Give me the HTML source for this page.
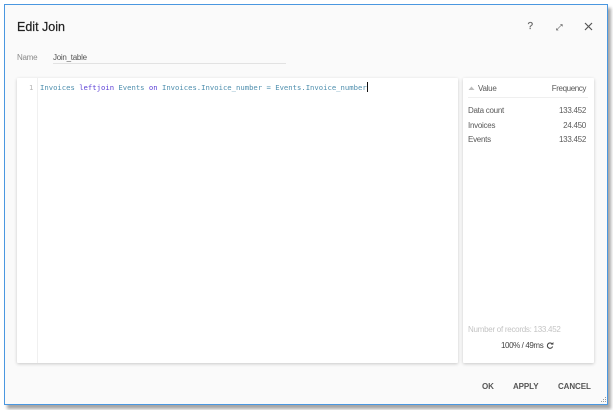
<!DOCTYPE html>
<html>
<head>
<meta charset="utf-8">
<style>
html,body{margin:0;padding:0;background:#fff;}
body{width:613px;height:410px;position:relative;overflow:hidden;font-family:"Liberation Sans",sans-serif;}
#w{position:absolute;left:0;top:0;width:613px;height:410px;filter:blur(.25px);}
.a{position:absolute;white-space:nowrap;}
#frame{left:4px;top:4px;width:602px;height:399px;background:#fafafa;border:1px solid #4a97e0;box-shadow:3px 4px 3px rgba(0,0,0,.35);}
.card{background:#fff;box-shadow:0 1px 3px rgba(0,0,0,.2);border-radius:1px;}
.t{font-size:8px;letter-spacing:-.27px;color:#5a5a5a;line-height:12px;}
.r{text-align:right;}
.code{font-family:"DejaVu Sans Mono",monospace;font-size:7.24px;line-height:12px;color:#4f8fae;}
.k{color:#5b3fd6;}
.btn{font-size:8px;font-weight:bold;color:#555;line-height:12px;letter-spacing:-.1px;}
</style>
</head>
<body>
<div id="w">
<div class="a" id="frame"></div>

<div class="a" style="left:17px;top:19px;font-size:12.5px;line-height:16px;color:#222;-webkit-text-stroke:.2px #222;">Edit Join</div>

<div class="a" style="left:527.5px;top:21px;font-size:10px;line-height:12px;color:#666;-webkit-text-stroke:.2px #666;">?</div>
<svg class="a" style="left:555px;top:22px" width="9" height="10" viewBox="0 0 9 10">
<path d="M2.5 7L6 3.5" stroke="#888" stroke-width=".8" fill="none"/>
<path d="M1.2 6L1.2 8.4L3.6 8.4Z M5 2.2L7.6 2.2L7.6 4.8Z" fill="#666"/>
</svg>
<svg class="a" style="left:583px;top:21px" width="11" height="11" viewBox="0 0 11 11">
<path d="M2 2L9 9M9 2L2 9" stroke="#555" stroke-width="1.2" fill="none"/>
</svg>

<div class="a t" style="left:17px;top:52px;color:#8a8a8a;">Name</div>
<div class="a t" style="left:53px;top:52px;color:#555;">Join_table</div>
<div class="a" style="left:53px;top:63px;width:233px;height:1px;background:#e2e2e2;"></div>

<div class="a card" style="left:17px;top:78px;width:441px;height:285px;"></div>
<div class="a" style="left:37px;top:78px;width:1px;height:285px;background:#f0f0f0;"></div>
<div class="a code" style="left:29px;top:82px;color:#b5b5b5;">1</div>
<div class="a code" style="left:40px;top:82px;">Invoices <span class="k">leftjoin</span> Events <span class="k">on</span> Invoices.Invoice_number = Events.Invoice_number</div>
<div class="a" style="left:367px;top:82px;width:1px;height:10px;background:#111;"></div>

<div class="a card" style="left:463px;top:78px;width:131px;height:285px;"></div>
<svg class="a" style="left:468px;top:85px" width="7" height="6" viewBox="0 0 7 6"><path d="M0.5 5L3.5 1.5L6.5 5Z" fill="#bbb"/></svg>
<div class="a t" style="left:478px;top:83px;">Value</div>
<div class="a t r" style="right:27px;top:83px;letter-spacing:-.4px;">Frequency</div>
<div class="a" style="left:468px;top:97px;width:120px;height:1px;background:#efefef;"></div>

<div class="a t" style="left:468px;top:105px;">Data count</div>
<div class="a t r" style="right:27px;top:105px;">133.452</div>
<div class="a t" style="left:468px;top:120px;">Invoices</div>
<div class="a t r" style="right:27px;top:120px;">24.450</div>
<div class="a t" style="left:468px;top:134px;">Events</div>
<div class="a t r" style="right:27px;top:134px;">133.452</div>

<div class="a t" style="left:468px;top:324px;color:#c4c4c4;">Number of records: 133.452</div>
<div class="a t" style="left:501px;top:340px;color:#444;letter-spacing:-.4px;">100% / 49ms</div>
<svg class="a" style="left:546px;top:341px" width="8" height="9" viewBox="0 0 8 9">
<path d="M6.2 3A2.7 2.7 0 1 0 6.6 5.5" stroke="#444" stroke-width="1.1" fill="none"/>
<path d="M4.8 3.6L7.4 3.6L7.4 1Z" fill="#444"/>
</svg>

<div class="a btn" style="left:482px;top:381px;">OK</div>
<div class="a btn" style="left:513px;top:381px;">APPLY</div>
<div class="a btn" style="left:558px;top:381px;">CANCEL</div>

<svg class="a" style="left:601px;top:397px" width="6" height="6" viewBox="0 0 6 6">
<path d="M4 0h1v1H4zM2 2h1v1H2zM4 2h1v1H4zM0 4h1v1H0zM2 4h1v1H2zM4 4h1v1H4z" fill="#9a9a9a"/>
</svg>
</div>
</body>
</html>
